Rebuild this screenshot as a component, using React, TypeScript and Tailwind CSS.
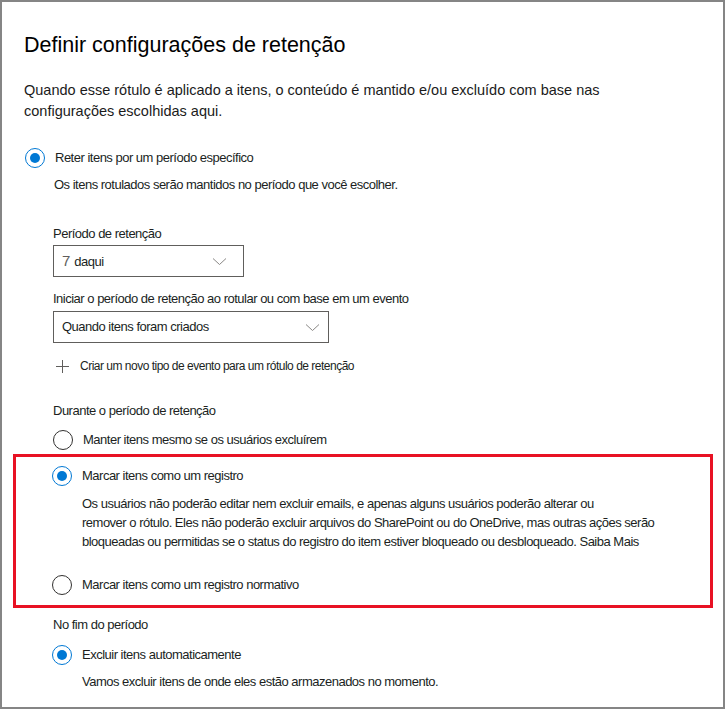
import React from "react";

const sans = "font-['Liberation_Sans',Arial,sans-serif]";

function Radio({ checked }: { checked?: boolean }) {
  return (
    <span
      className={
        "flex h-[20px] w-[20px] shrink-0 items-center justify-center rounded-full border " +
        (checked ? "border-[#0078d4]" : "border-[#323130]")
      }
    >
      {checked && <span className="h-[10px] w-[10px] rounded-full bg-[#0078d4]" />}
    </span>
  );
}

function Chevron() {
  return (
    <svg width="15" height="9" viewBox="0 0 15 9" fill="none">
      <path d="M1 1.5 L7.5 7.5 L14 1.5" stroke="#8a8886" strokeWidth="1" />
    </svg>
  );
}

function Option({
  label,
  checked,
  className = "",
}: {
  label: string;
  checked?: boolean;
  className?: string;
}) {
  return (
    <div className={"flex h-[20px] items-center gap-[10px] " + className}>
      <Radio checked={checked} />
      <span className="text-[13px] leading-[20px] tracking-[-0.5px] text-[#201f1e]">{label}</span>
    </div>
  );
}

export default function App() {
  return (
    <div className={`${sans} h-[709px] w-[725px] overflow-hidden border-2 border-[#858585] bg-white text-[#201f1e]`}>
      <div className="pl-[22px] pr-[20px] pt-[29px]">
        <h1 className="text-[21.5px] leading-[28px] text-black">Definir configurações de retenção</h1>
        <p className="mt-[21px] text-[14.5px] leading-[21px] text-[#1b1b1b]">
          Quando esse rótulo é aplicado a itens, o conteúdo é mantido e/ou excluído com base nas
          <br />
          configurações escolhidas aqui.
        </p>

        <Option className="mt-[26px] pl-[1px]" checked label="Reter itens por um período específico" />
        <p className="mt-[8px] pl-[30px] text-[13px] leading-[18px] tracking-[-0.5px]">
          Os itens rotulados serão mantidos no período que você escolher.
        </p>

        <div className="pl-[29px]">
          <div className="mt-[31px] text-[13px] leading-[18px] tracking-[-0.5px]">Período de retenção</div>
          <div className="mt-[2px] flex h-[32px] w-[191px] items-center justify-between border border-[#605e5c] pl-[8px] pr-[16px]">
            <span className="flex items-baseline gap-[4px]">
              <span className="text-[15px] text-[#605e5c]">7</span>
              <span className="text-[13px] tracking-[-0.5px] text-[#201f1e]">daqui</span>
            </span>
            <Chevron />
          </div>

          <div className="mt-[13px] text-[13px] leading-[18px] tracking-[-0.5px]">
            Iniciar o período de retenção ao rotular ou com base em um evento
          </div>
          <div className="mt-[3px] flex h-[32px] w-[276px] items-center justify-between border border-[#605e5c] pl-[8px] pr-[8px]">
            <span className="text-[13px] tracking-[-0.5px]">Quando itens foram criados</span>
            <Chevron />
          </div>

          <div className="mt-[14px] flex h-[18px] items-center gap-[11px] pl-[3px]">
            <svg width="13" height="13" viewBox="0 0 13 13" fill="none">
              <path d="M6.5 0 V13 M0 6.5 H13" stroke="#605e5c" strokeWidth="1" />
            </svg>
            <span className="text-[12px] leading-[18px] tracking-[-0.5px]">
              Criar um novo tipo de evento para um rótulo de retenção
            </span>
          </div>

          <div className="mt-[27px] text-[13px] leading-[18px] tracking-[-0.5px]">Durante o período de retenção</div>
          <Option className="mt-[10px]" label="Manter itens mesmo se os usuários excluírem" />
        </div>
      </div>

      <div className="ml-[11px] mt-[4px] h-[154px] w-[700px] border-[3px] border-[#e81123] pl-[36px] pt-[9px]">
        <Option checked label="Marcar itens como um registro" />
        <p className="mt-[8px] pl-[30px] pr-[30px] text-[13px] leading-[19px] tracking-[-0.5px]">
          Os usuários não poderão editar nem excluir emails, e apenas alguns usuários poderão alterar ou
          <br />
          remover o rótulo. Eles não poderão excluir arquivos do SharePoint ou do OneDrive, mas outras ações serão
          <br />
          bloqueadas ou permitidas se o status do registro do item estiver bloqueado ou desbloqueado. Saiba Mais
        </p>
        <Option className="mt-[24px]" label="Marcar itens como um registro normativo" />
      </div>

      <div className="pl-[50px]">
        <div className="mt-[8px] pl-[1px] text-[13px] leading-[18px] tracking-[-0.5px]">No fim do período</div>
        <Option className="mt-[11px]" checked label="Excluir itens automaticamente" />
        <p className="mt-[8px] pl-[30px] text-[13px] leading-[18px] tracking-[-0.5px]">
          Vamos excluir itens de onde eles estão armazenados no momento.
        </p>
      </div>
    </div>
  );
}
